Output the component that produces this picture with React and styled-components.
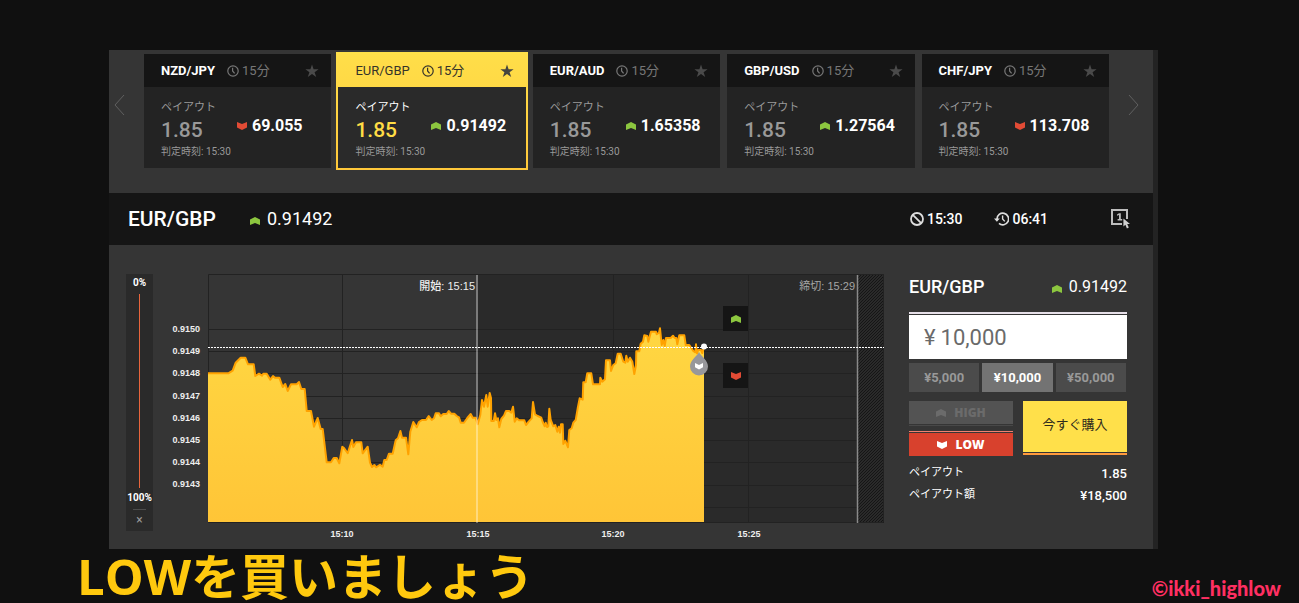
import React, { useState } from "react";
import styled, { createGlobalStyle, css } from "styled-components";

const GlobalStyle = createGlobalStyle`
  * {
    box-sizing: border-box;
  }
  body {
    margin: 0;
    background: #101010;
    color: #ffffff;
    font-family: Roboto, "Noto Sans CJK JP", sans-serif;
  }
  button,
  input {
    font-family: inherit;
    border: 0;
    border-radius: 0;
    padding: 0;
    margin: 0;
    cursor: pointer;
  }
`;

const Page = styled.div`
  min-height: 100vh;
  padding-top: 50px;
`;

const Panel = styled.main`
  margin: 0 141px 0 109px;
  background: #353535;
  border-right: 5px solid #232323;
`;

// CAROUSEL
const Carousel = styled.section`
  display: flex;
  padding: 4px 0 25px;
`;

const ArrowButton = styled.button`
  display: flex;
  align-items: center;
  justify-content: center;
  width: ${(props) => (props.$wide ? "44px" : "35px")};
  padding: ${(props) => (props.$wide ? "0 0 12px 4px" : "0 15px 12px 0")};
  background: none;
`;

const CardList = styled.div`
  flex: 1;
  display: grid;
  grid-template-columns: repeat(5, 1fr);
  gap: 7px;
`;

const CardHeader = styled.div`
  display: flex;
  align-items: center;
  height: 33px;
  padding: 0 12px 0 17px;
  background: #151515;
  color: #777777;
  font-size: 13px;
`;

const CardName = styled.span`
  margin-right: 12px;
  color: #ffffff;
  font-weight: 700;
`;

const CardTerm = styled.span`
  display: flex;
  align-items: center;
  gap: 3px;
  flex: 1;
  line-height: 16px;
`;

const CardBody = styled.div`
  display: grid;
  grid-template-columns: 76px 1fr;
  align-content: start;
  height: 81px;
  padding: 13px 0 0 17px;
  color: #999999;
`;

const PayoutLabel = styled.span`
  grid-column: 1 / 3;
  font-size: 11px;
  line-height: 16px;
`;

const PayoutRate = styled.span`
  font-size: 21px;
  font-weight: 500;
  line-height: 28px;
`;

const CardPrice = styled.span`
  display: flex;
  align-items: center;
  gap: 5px;
  height: 18px;
  color: #ffffff;
  font-size: 16px;
  font-weight: 700;

  svg {
    margin-top: 2px;
  }
`;

const CardTime = styled.span`
  grid-column: 1 / 3;
  font-size: 10px;
  line-height: 16px;
`;

const Card = styled.article`
  background: #232323;
  ${(props) =>
    props.$selected &&
    css`
      margin: -2px;
      border: 2px solid #ffcc3c;
      border-image: linear-gradient(#ffe04a, #ffc83a) 1;
      background: #2a2a2a;

      ${CardHeader} {
        background: linear-gradient(#ffde49, #ffd945);
        color: #35322a;
      }
      ${CardName} {
        color: #35322a;
        font-weight: 400;
      }
      ${PayoutLabel} {
        color: #ffffff;
      }
      ${PayoutRate} {
        color: #ffdc45;
      }
    `}
`;

// TITLE BAR
const TitleBar = styled.header`
  display: flex;
  align-items: center;
  height: 52px;
  padding: 0 22px 0 19px;
  background: #151515;
`;

const BarTitle = styled.h1`
  margin: 0 34px 0 0;
  font-size: 21px;
  font-weight: 500;
  line-height: 24px;
`;

const Price = styled.span`
  display: flex;
  align-items: center;
  gap: 7px;
  font-size: ${(props) => (props.$small ? "16px" : "18px")};
  line-height: 24px;

  svg {
    margin-top: 4px;
  }
`;

const BarTimes = styled.div`
  display: flex;
  align-items: center;
  gap: 32px;
  margin-left: auto;
`;

const BarTime = styled.span`
  display: flex;
  align-items: center;
  gap: 3px;
  font-size: 14px;
  font-weight: 500;
`;

const OneClickButton = styled.button`
  display: flex;
  margin-left: 63px;
  background: none;
`;

// TRADE AREA
const Trade = styled.section`
  display: flex;
  align-items: flex-start;
  padding: 29px 26px 4px 17px;
`;

const Sentiment = styled.div`
  display: flex;
  flex-direction: column;
  align-items: center;
  width: 27px;
  height: 257px;
  margin-right: 17px;
  padding-top: 2px;
  background: #2a2a2a;
  font-size: 10px;
  font-weight: 700;
  line-height: 14px;
`;

const SentimentLine = styled.div`
  flex: 1;
  width: 1px;
  margin: 4px 0 3px;
  background: #e8653c;
`;

const CloseButton = styled.button`
  width: 13px;
  height: 22px;
  margin-top: 4px;
  border-top: 1px solid #4d4d4d;
  background: none;
  color: #999999;
  font-size: 12px;
  line-height: 18px;
  padding-bottom: 2px;
`;

const ChartBox = styled.div`
  position: relative;
  flex: 1;
  margin-right: 25px;
`;

const ChartSvg = styled.svg`
  display: block;
  width: 100%;
  height: auto;
`;

const AxisText = styled.text`
  fill: #eeeeee;
  font-family: "Liberation Sans", Arial, sans-serif;
  font-size: 9px;
  font-weight: 700;
`;

const MarkText = styled.text`
  fill: ${(props) => (props.$dim ? "#a5a5a5" : "#eeeeee")};
  font-family: "Liberation Sans", "Noto Sans CJK JP", sans-serif;
  font-size: 11px;
  font-weight: ${(props) => (props.$dim ? 400 : 500)};
  text-anchor: end;
`;

// the two quick buttons float over the chart
const QuickButtons = styled.div`
  position: absolute;
  top: 32px;
  right: 136px;
  display: flex;
  flex-direction: column;
  gap: 32px;
`;

const QuickButton = styled.button`
  display: flex;
  align-items: center;
  justify-content: center;
  width: 25px;
  height: 25px;
  background: #151515;
`;

const Order = styled.form`
  width: 218px;
`;

const OrderHeader = styled.div`
  display: flex;
  align-items: center;
  justify-content: space-between;
  height: 25px;
  margin-bottom: 13px;
`;

const OrderTitle = styled.h2`
  margin: 0;
  font-size: 18px;
  font-weight: 500;
`;

const AmountBox = styled.label`
  display: flex;
  align-items: center;
  gap: 5px;
  height: 44px;
  margin-top: 1px;
  padding-left: 15px;
  background: #ffffff;
  color: #6a6a6a;
  font-size: 22px;
`;

const AmountInput = styled.input`
  flex: 1;
  min-width: 0;
  outline: 0;
  background: none;
  color: inherit;
  font-size: 22px;
  cursor: text;
`;

const Stripe = styled.div`
  height: ${(props) => props.$size || 1}px;
  background: ${(props) => props.$color};
`;

const Presets = styled.div`
  display: grid;
  grid-template-columns: repeat(3, 1fr);
  gap: 3px;
  margin: 4px 1px 9px 0;
`;

const Preset = styled.button`
  height: 29px;
  background: ${(props) => (props.$active ? "#737373" : "#4b4b4b")};
  color: ${(props) => (props.$active ? "#ffffff" : "#999999")};
  font-size: 13px;
  font-weight: 700;
  padding-bottom: 1px;
`;

const Actions = styled.div`
  display: grid;
  grid-template-columns: 1fr 1fr;
  gap: 10px;
`;

const SideButton = styled.button`
  display: flex;
  align-items: center;
  justify-content: center;
  gap: 8px;
  width: 100%;
  height: 23px;
  margin: ${(props) => (props.$low ? "1px 0 0" : "0 0 1px")};
  background: ${(props) => (props.$low ? "#d8412d" : "#535353")};
  color: ${(props) => (props.$low ? "#ffffff" : "#6b6b6b")};
  font-family: "Open Sans", sans-serif;
  font-size: 12px;
  font-weight: 800;
`;

const SideGap = styled.div`
  height: 5px;
`;

const BuyButton = styled.button`
  width: 100%;
  height: 51px;
  margin-bottom: 1px;
  padding-bottom: 6px;
  background: #ffe04a;
  color: #2e2b1c;
  font-size: 13px;
`;

const Totals = styled.dl`
  margin: 5px 0 0;
`;

const TotalRow = styled.div`
  display: flex;
  align-items: center;
  justify-content: space-between;
  height: 22px;

  dt {
    margin-top: 2px;
    font-size: 11px;
    line-height: 16px;
  }
  dd {
    margin: 2px 0 0;
    font-size: 13px;
    font-weight: 500;
  }
`;

// FOOTER
const Footer = styled.footer`
  display: flex;
  align-items: flex-start;
  justify-content: space-between;
  height: 54px;
  padding: 0 18px 0 77px;
`;

const Caption = styled.p`
  margin: 0;
  color: #ffc90e;
  font-family: "Open Sans", "Noto Sans CJK JP", sans-serif;
  font-size: 49px;
  font-weight: 700;
  line-height: 54px;
`;

const Credit = styled.p`
  margin: 27px 0 0;
  color: #ff2f62;
  font-family: Lato, sans-serif;
  font-size: 20px;
  font-weight: 900;
  line-height: 24px;
`;

const UpIcon = ({ color = "#8cc63f" }) => (
  <svg width="10" height="8" viewBox="0 0 10 8">
    <path d="M0 2.4 5 0l5 2.400V8L5 6 0 8Z" fill={color} />
  </svg>
);

const DownIcon = ({ color = "#e24b35" }) => (
  <svg width="10" height="8" viewBox="0 0 10 8">
    <path d="M0 0l5 2L10 0v5.600L5 8 0 5.600Z" fill={color} />
  </svg>
);

const ClockIcon = () => (
  <svg width="12" height="12" viewBox="0 0 12 12" fill="none" stroke="currentColor">
    <circle cx="6" cy="6" r="5.2" strokeWidth="1.2" />
    <path d="M5.6 2.8V6l2 2.4" strokeWidth="1.2" />
  </svg>
);

const StarIcon = ({ color }) => (
  <svg width="14" height="14" viewBox="0 0 14 14">
    <path
      d="M7 .4l1.6 4.8h5L9.6 8.2l1.6 4.9L7 10.1l-4.2 3 1.6-4.9L.4 5.2h5Z"
      fill={color}
    />
  </svg>
);

const BanIcon = () => (
  <svg width="14" height="14" viewBox="0 0 14 14" fill="none" stroke="#dddddd">
    <circle cx="7" cy="7" r="6" strokeWidth="1.8" />
    <path d="M2.8 2.8l8.4 8.4" strokeWidth="1.8" />
  </svg>
);

const HistoryIcon = () => (
  <svg width="15" height="14" viewBox="0 0 15 14" fill="none" stroke="#dddddd">
    <path d="M3 7a5.8 5.8 0 1 1 2 4.4" strokeWidth="1.7" />
    <path d="M0 6.4h5.8L2.9 9.8Z" fill="#dddddd" stroke="none" />
    <path d="M8.6 3.6V7l2.2 2.4" strokeWidth="1.4" />
  </svg>
);

const OneClickIcon = () => (
  <svg width="20" height="20" viewBox="0 0 20 20">
    <path
      d="M11 15H1V1h15v9"
      fill="none"
      stroke="#bdbdbd"
      strokeWidth="2"
    />
    <path d="M6 5.6 8 4.2h1.8V10h1.4v1.4H6.6V10H8V6L6 6.8Z" fill="#bdbdbd" />
    <path
      d="M12.4 9.4v8.2l2-1.8 1.5 3.6 1.9-.8-1.6-3.5h2.8Z"
      fill="#cfcfcf"
    />
  </svg>
);

const cards = [
  { name: "NZD/JPY", price: "69.055", up: false },
  { name: "EUR/GBP", price: "0.91492", up: true },
  { name: "EUR/AUD", price: "1.65358", up: true },
  { name: "GBP/USD", price: "1.27564", up: true },
  { name: "CHF/JPY", price: "113.708", up: false },
];

const presets = ["5,000", "10,000", "50,000"];

const yLabels = [
  "0.9150",
  "0.9149",
  "0.9148",
  "0.9147",
  "0.9146",
  "0.9145",
  "0.9144",
  "0.9143",
];

const xLabels = [
  { x: 134, text: "15:10" },
  { x: 270, text: "15:15" },
  { x: 405, text: "15:20" },
  { x: 541, text: "15:25" },
];

const gridRows = [55, 77, 99, 122, 144, 166, 188, 211, 233];

const priceLine =
  "0,99.3 20.3,99.3 24.7,96.7 27.7,88.7 32.7,83.7 37.3,83.7 40,90.3 45.7,90.3 47.3,102 51,99.7 54,101.7 55.3,99.7 58.7,99.7 " +
  "62.3,105.7 65,102 67,103.7 71.3,103.7 74.7,113 77.3,110 79.7,117 83,110.3 88.7,110.3 91,108 93.3,115 96.7,115 98.7,137 " +
  "103,137 106,152.7 109.7,144 112.7,155 114.7,155 118.7,188.3 123,188.3 125.7,184 128.7,184 131.3,189.3 134.3,172.7 136,174 " +
  "139.7,179.3 144,166 145.3,173 148,168.3 153.3,168.3 154.7,179.3 159.7,172.7 162,188.7 164,193 166.3,191 168.3,193.3 " +
  "172,190.7 174.7,192.7 176.3,186 178.7,186 181,179.7 184.7,179.7 187.7,166.3 190,164.3 192.4,157 194,163.7 198,163.7 " +
  "200.3,180.3 202.3,157.7 205.3,148 208.7,153.3 211,148 214,146 218,146 220.7,142 223.7,146 226,144.3 227.7,139.3 231,139.3 " +
  "232.7,142.3 235.3,140 238.7,140 240.7,137 243,139.7 246.3,139.7 248.7,142 251,143.3 252.7,148.7 256,148.7 259.3,144 " +
  "262.7,140 264.7,143.7 267.7,143.7 269.7,150.3 272.3,141 274,126 276,132.7 278.3,121 279.7,132.7 281.7,119 283,124 " +
  "283.3,147 285.7,147 287,139.3 288.3,146 290,144.3 291.3,153.3 293.3,145 296,141.7 298,137 301.3,137 303.3,138.7 305,132.7 " +
  "306.7,147.7 308.7,144.3 311,146.3 316.3,146.3 318,151 320.7,147.7 323.7,144.3 325,128 327,140.3 329.7,142 333.3,143.7 " +
  "334.7,148 336.7,152.3 337.7,148.7 339,153 340.3,152.3 341.3,134.7 342.7,146 345.3,152.3 347.3,151 349.3,157.7 350.7,152.7 " +
  "352,158.7 353,150.3 354.7,150.3 355.3,170 357.3,166.7 360,173.3 361.3,156 363.7,154.3 365.3,148.7 367.7,146 369.7,134.3 " +
  "371.7,124.3 374.7,125.7 375.3,108.3 377.7,108.3 379.3,99.3 383.3,99.3 385,110.3 392,110.3 392.3,103.7 394.3,107.7 " +
  "397,105.3 398,86.3 402,86.3 403,97 405.3,91 407.7,89.3 409.7,79.7 412.7,79.7 415.3,87.7 417.3,88.7 418.3,81.7 419.7,87.7 " +
  "422,83.7 424.3,87.7 426.3,100 428,91 428.3,77.3 431.3,77.3 432.7,69.7 435,67.7 436.3,61.3 439.3,62 440.3,67.7 443,57.7 " +
  "448,57.7 448.7,60.3 451,58.7 452,54.3 453.7,71 455.3,66 456.7,72 458,64 462.7,64 465,61.7 466.7,64 468.3,64 469.3,70.3 " +
  "471.3,61.3 476.3,61.3 477.7,71 481.3,71 485.3,77 487.3,78.3 488,70.3 489,79.3 490.3,76 493,76 494.3,79 496,73";

function PairCard({ name, price, up, selected }) {
  const star = selected ? "#45443f" : "#4a4a4a";
  return (
    <Card $selected={selected}>
      <CardHeader>
        <CardName>{name}</CardName>
        <CardTerm>
          <ClockIcon />
          15分
        </CardTerm>
        <StarIcon color={star} />
      </CardHeader>
      <CardBody>
        <PayoutLabel>ペイアウト</PayoutLabel>
        <PayoutRate>1.85</PayoutRate>
        <CardPrice>
          {up ? <UpIcon /> : <DownIcon />}
          {price}
        </CardPrice>
        <CardTime>判定時刻: 15:30</CardTime>
      </CardBody>
    </Card>
  );
}

function Chart() {
  return (
    <ChartSvg viewBox="-38 0 714 271">
      <defs>
        <linearGradient id="area" x1="0" y1="0" x2="0" y2="1">
          <stop offset="0" stopColor="#ffd742" />
          <stop offset="1" stopColor="#ffc537" />
        </linearGradient>
        <pattern
          id="hatch"
          width="3"
          height="3"
          patternUnits="userSpaceOnUse"
        >
          <rect width="3" height="3" fill="#2a2a2a" />
          <path d="M-1 1 1-1M0 3 3 0M2 4 4 2" stroke="#151515" />
        </pattern>
      </defs>
      <rect x="270" y="0" width="406" height="249" fill="#2a2a2a" />
      <rect x="650" y="0" width="26" height="249" fill="url(#hatch)" />
      <g stroke="#222222">
        {gridRows.map((y) => (
          <path key={y} d={`M0 ${y + 0.5}H650`} />
        ))}
        <path d="M134.5 0V249M405.5 0V249M540.5 0V249" />
        <path d="M.5 .5H675.5V248.5H.5Z" fill="none" />
      </g>
      <polygon points={`0,248 ${priceLine} 496,248`} fill="url(#area)" />
      <polyline
        points={priceLine}
        fill="none"
        stroke="#ffa200"
        strokeWidth="2"
        strokeLinejoin="round"
      />
      <path d="M269 1V249" stroke="#ffffff" strokeOpacity=".35" strokeWidth="2" />
      <path d="M649.5 1V249" stroke="#8a8a8a" strokeWidth="1.5" />
      <path d="M0 73.5H676" stroke="#ffffff" strokeDasharray="2 1" />
      <path
        d="M491 78c2 4.5 9 8 9 14.5a9 9 0 0 1-18 0c0-6.5 7-10 9-14.5Z"
        fill="#97979b"
      />
      <path d="M487 89l4 2 4-2v4.2l-4 2.300-4-2.300Z" fill="#ffffff" />
      <circle cx="496" cy="72.5" r="3" fill="#ffffff" />
      <MarkText x="267" y="16">
        開始: 15:15
      </MarkText>
      <MarkText x="647" y="16" $dim>
        締切: 15:29
      </MarkText>
      {yLabels.map((label, i) => (
        <AxisText key={label} x="-8" y={58 + Math.round(i * 22.2)} textAnchor="end">
          {label}
        </AxisText>
      ))}
      {xLabels.map(({ x, text }) => (
        <AxisText key={text} x={x} y="263" textAnchor="middle">
          {text}
        </AxisText>
      ))}
    </ChartSvg>
  );
}

export default function App() {
  const [amount, setAmount] = useState("10,000");

  return (
    <>
      <GlobalStyle />
      <Page>
        <Panel>
          <Carousel>
            <ArrowButton aria-label="前へ">
              <svg width="11" height="22" viewBox="0 0 11 22" fill="none" stroke="#606060">
                <path d="M10 1 1 11l9 10" />
              </svg>
            </ArrowButton>
            <CardList>
              {cards.map((card) => (
                <PairCard
                  key={card.name}
                  {...card}
                  selected={card.name === "EUR/GBP"}
                />
              ))}
            </CardList>
            <ArrowButton $wide aria-label="次へ">
              <svg width="11" height="22" viewBox="0 0 11 22" fill="none" stroke="#606060">
                <path d="M1 1l9 10-9 10" />
              </svg>
            </ArrowButton>
          </Carousel>

          <TitleBar>
            <BarTitle>EUR/GBP</BarTitle>
            <Price>
              <UpIcon />
              0.91492
            </Price>
            <BarTimes>
              <BarTime>
                <BanIcon />
                15:30
              </BarTime>
              <BarTime>
                <HistoryIcon />
                06:41
              </BarTime>
            </BarTimes>
            <OneClickButton aria-label="ワンクリック">
              <OneClickIcon />
            </OneClickButton>
          </TitleBar>

          <Trade>
            <Sentiment>
              <span>0%</span>
              <SentimentLine />
              <span>100%</span>
              <CloseButton>×</CloseButton>
            </Sentiment>

            <ChartBox>
              <Chart />
              <QuickButtons>
                <QuickButton aria-label="HIGH">
                  <UpIcon />
                </QuickButton>
                <QuickButton aria-label="LOW">
                  <DownIcon />
                </QuickButton>
              </QuickButtons>
            </ChartBox>

            <Order onSubmit={(e) => e.preventDefault()}>
              <OrderHeader>
                <OrderTitle>EUR/GBP</OrderTitle>
                <Price $small>
                  <UpIcon />
                  0.91492
                </Price>
              </OrderHeader>
              <Stripe $size={2} $color="#e6dfe8" />
              <AmountBox>
                ¥
                <AmountInput
                  type="text"
                  value={amount}
                  onChange={(e) => setAmount(e.target.value)}
                />
              </AmountBox>
              <Presets>
                {presets.map((value) => (
                  <Preset
                    key={value}
                    type="button"
                    $active={value === amount}
                    onClick={() => setAmount(value)}
                  >
                    ¥{value}
                  </Preset>
                ))}
              </Presets>
              <Actions>
                <div>
                  <SideButton type="button">
                    <UpIcon color="#6b6b6b" />
                    HIGH
                  </SideButton>
                  <Stripe $color="#484848" />
                  <SideGap />
                  <Stripe $color="#f08070" />
                  <SideButton type="button" $low>
                    <DownIcon color="#ffffff" />
                    LOW
                  </SideButton>
                </div>
                <div>
                  <BuyButton type="submit">今すぐ購入</BuyButton>
                  <Stripe $size={2} $color="#ff9a3c" />
                </div>
              </Actions>
              <Totals>
                <TotalRow>
                  <dt>ペイアウト</dt>
                  <dd>1.85</dd>
                </TotalRow>
                <TotalRow>
                  <dt>ペイアウト額</dt>
                  <dd>¥18,500</dd>
                </TotalRow>
              </Totals>
            </Order>
          </Trade>
        </Panel>

        <Footer>
          <Caption>LOWを買いましょう</Caption>
          <Credit>©ikki_highlow</Credit>
        </Footer>
      </Page>
    </>
  );
}
